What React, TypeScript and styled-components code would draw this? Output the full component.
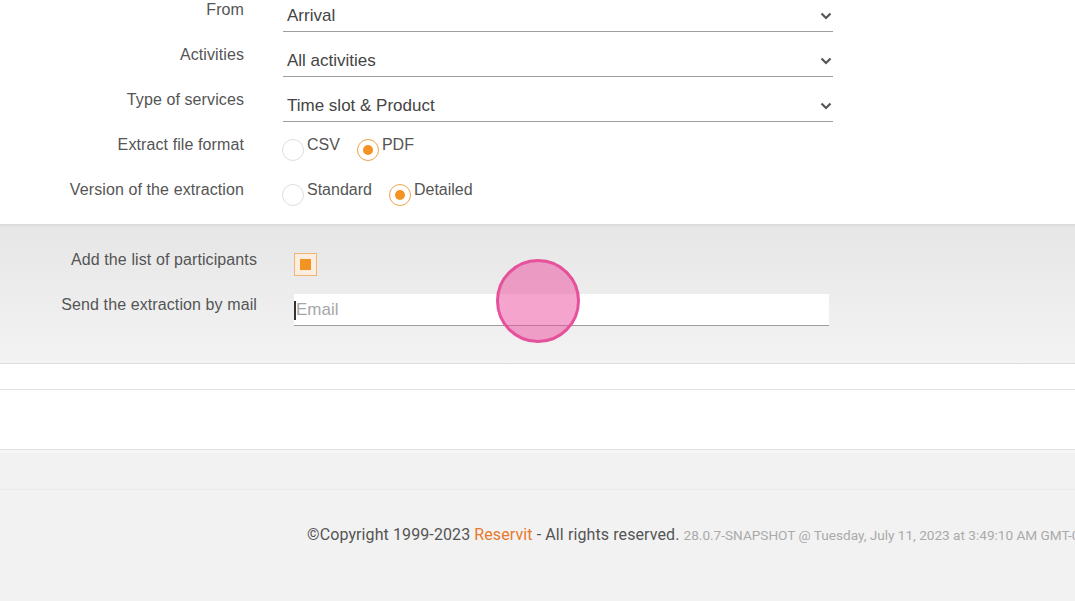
import React from "react";
import styled, { createGlobalStyle } from "styled-components";

const GlobalStyle = createGlobalStyle`
  html, body {
    margin: 0;
    padding: 0;
    background: #f2f2f2;
    overflow: hidden;
  }
  body {
    font-family: "Liberation Sans", Arial, sans-serif;
  }
`;

const Page = styled.div`
  position: relative;
  width: 1075px;
  height: 601px;
  overflow: hidden;
  background: #f2f2f2;
`;

const TopSection = styled.div`
  background: #fff;
  padding-bottom: 13px;
  margin-top: -14px;
`;

const GreySection = styled.div`
  background: linear-gradient(#e6e6e6, #f3f3f3);
  box-shadow: inset 0 3px 3px -2px rgba(0, 0, 0, 0.08);
  padding: 25px 0 24px;
  border-bottom: 1px solid #dcdcdc;
`;

const Row = styled.div`
  display: flex;
  align-items: flex-start;
  height: 45px;
`;

const Label = styled.div<{ $width: number; $gap: number; $top: number }>`
  width: ${(p) => p.$width}px;
  margin-right: ${(p) => p.$gap}px;
  padding-top: ${(p) => p.$top}px;
  text-align: right;
  font-size: 16px;
  line-height: 20px;
  color: #555;
  white-space: nowrap;
  letter-spacing: 0.1px;
`;

const Select = styled.div`
  margin-top: 14px;
  width: 546px;
  height: 31px;
  border-bottom: 1px solid #9e9e9e;
  display: flex;
  align-items: center;
  justify-content: space-between;
  padding: 0 0 0 4px;
  box-sizing: content-box;
  font-size: 17px;
  color: #444;
`;

const Chevron = styled.svg`
  width: 12px;
  height: 8px;
  margin-right: 1px;
`;

const RadioGroup = styled.div`
  display: flex;
  align-items: flex-start;
  padding-top: 14px;
  margin-left: -1px;
`;

const RadioOption = styled.label`
  display: flex;
  align-items: flex-start;
  margin-right: 17px;
  font-size: 16px;
  line-height: 20px;
  color: #555;
`;

const RadioCircle = styled.span<{ $checked?: boolean }>`
  width: 20px;
  height: 20px;
  margin-top: 4px;
  margin-right: 3px;
  border-radius: 50%;
  border: 1px solid ${(p) => (p.$checked ? "#eea24a" : "#dedede")};
  background: #fff;
  display: flex;
  align-items: center;
  justify-content: center;
  &::after {
    content: "";
    width: 10px;
    height: 10px;
    border-radius: 50%;
    background: ${(p) => (p.$checked ? "#f39322" : "transparent")};
  }
`;

const Checkbox = styled.span`
  margin-top: 4px;
  width: 21px;
  height: 21px;
  border: 1px solid #f0b574;
  background: #fbeee0;
  display: flex;
  align-items: center;
  justify-content: center;
  &::after {
    content: "";
    width: 11px;
    height: 11px;
    background: #f39322;
  }
`;

const EmailInput = styled.div`
  width: 535px;
  height: 31px;
  background: #fff;
  border-bottom: 1px solid #9e9e9e;
  display: flex;
  align-items: center;
  font-size: 17px;
  color: #a6a6a6;
`;

const Caret = styled.span`
  display: inline-block;
  width: 2px;
  height: 19px;
  background: #333;
  margin: 2px 0 0 0;
`;

const Spacer = styled.div<{ $height: number }>`
  height: ${(p) => p.$height}px;
  background: #fff;
  border-bottom: 1px solid #e2e2e2;
`;

const Footer = styled.footer`
  background: #f2f2f2;
  border-top: 3px solid #f6f6f6;
`;

const FooterBand = styled.div`
  height: 36px;
  border-bottom: 1px solid #e9e9e9;
`;

const FooterText = styled.div`
  padding: 35px 0 0 307px;
  white-space: nowrap;
  overflow: hidden;
  font-family: Roboto, "Liberation Sans", sans-serif;
  font-size: 16px;
  line-height: 20px;
  color: #555;
  letter-spacing: 0.1px;
`;

const Brand = styled.span`
  color: #e6792c;
`;

const Version = styled.span`
  font-size: 13.6px;
  letter-spacing: 0;
  color: #aaa;
  margin-left: 4px;
`;

const ClickMarker = styled.div`
  position: absolute;
  left: 496px;
  top: 259px;
  width: 78px;
  height: 78px;
  border-radius: 50%;
  border: 3px solid #e5519a;
  background: rgba(236, 76, 156, 0.5);
  pointer-events: none;
`;

const selects = [
  { label: "From", value: "Arrival" },
  { label: "Activities", value: "All activities" },
  { label: "Type of services", value: "Time slot & Product" },
];

const radios = [
  { label: "Extract file format", options: ["CSV", "PDF"], checked: 1 },
  { label: "Version of the extraction", options: ["Standard", "Detailed"], checked: 1 },
];

export default function App() {
  return (
    <Page>
      <GlobalStyle />
      <TopSection>
        {selects.map((s) => (
          <Row key={s.label}>
            <Label $width={244} $gap={39} $top={14}>
              {s.label}
            </Label>
            <Select>
              <span>{s.value}</span>
              <Chevron viewBox="0 0 12 8">
                <path d="M1.5 1.5 L6 6 L10.5 1.5" fill="none" stroke="#555" strokeWidth="2.2" />
              </Chevron>
            </Select>
          </Row>
        ))}
        {radios.map((r) => (
          <Row key={r.label}>
            <Label $width={244} $gap={39} $top={14}>
              {r.label}
            </Label>
            <RadioGroup>
              {r.options.map((o, i) => (
                <RadioOption key={o}>
                  <RadioCircle $checked={i === r.checked} />
                  {o}
                </RadioOption>
              ))}
            </RadioGroup>
          </Row>
        ))}
      </TopSection>
      <GreySection>
        <Row>
          <Label $width={257} $gap={37} $top={1}>
            Add the list of participants
          </Label>
          <Checkbox />
        </Row>
        <Row>
          <Label $width={257} $gap={37} $top={1}>
            Send the extraction by mail
          </Label>
          <EmailInput>
            <Caret />
            Email
          </EmailInput>
        </Row>
      </GreySection>
      <Spacer $height={25} />
      <Spacer $height={59} />
      <Footer>
        <FooterBand />
        <FooterText>
          ©Copyright 1999-2023 <Brand>Reservit</Brand> - All rights reserved.
          <Version>28.0.7-SNAPSHOT @ Tuesday, July 11, 2023 at 3:49:10 AM GMT-0</Version>
        </FooterText>
      </Footer>
      <ClickMarker />
    </Page>
  );
}
